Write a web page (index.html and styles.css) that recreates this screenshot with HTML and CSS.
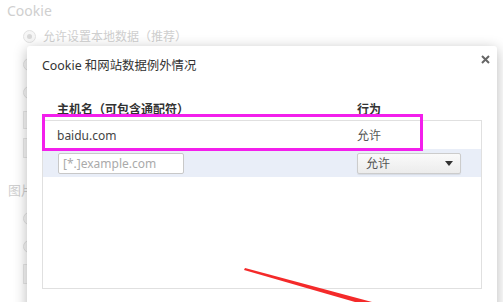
FILE: index.html
```html
<!DOCTYPE html>
<html>
<head>
    <meta charset="utf-8">
    <title>Cookie 和网站数据例外情况</title>
    <link rel="stylesheet" href="styles.css">
</head>
<body>
<div class="settings">
    <div class="section-title">Cookie</div>
    <div class="option"><span class="radio checked"></span>允许设置本地数据（推荐）</div>
    <div class="option"><span class="radio"></span></div>
    <div class="option"><span class="radio"></span></div>
    <div class="option"><span class="box"></span></div>
    <div class="option"><span class="button"></span></div>
    <div class="section-title second">图片</div>
    <div class="option"><span class="radio"></span></div>
    <div class="option"><span class="radio"></span></div>
    <div class="option"><span class="button"></span></div>
</div>

<div class="dialog">
    <div class="dialog-title">Cookie 和网站数据例外情况</div>
    <a class="close" href="#">
        <svg width="9" height="9" viewBox="0 0 9 9"><path d="M1 1L8 8M8 1L1 8" stroke="#666" stroke-width="2"/></svg>
    </a>

    <div class="columns">
        <span>主机名（可包含通配符）</span>
        <span>行为</span>
    </div>
    <div class="list">
        <div class="row">
            <span>baidu.com</span>
            <span class="behavior">允许</span>
        </div>
        <div class="row new">
            <span><input class="host" type="text" placeholder="[*.]example.com"></span>
            <span>
                <span class="select">允许<span class="caret"></span></span>
            </span>
        </div>
    </div>
</div>

<div class="highlight"></div>
<svg class="arrow" width="503" height="302" viewBox="0 0 503 302">
    <polygon points="245,268 372,302 355,302 244,270" fill="#f42a2a"/>
</svg>
</body>
</html>
```

FILE: styles.css
```css
body {
    margin: 0;
    width: 503px;
    height: 302px;
    overflow: hidden;
    position: relative;
    background: #fff;
    font: 12px "Noto Sans", "Noto Sans CJK SC", sans-serif;
    color: #444;
}

.settings {
    padding: 2px 0 0 7px;
    color: #cfcfcf;
}

.section-title {
    font-size: 14px;
    line-height: 18px;
    margin-bottom: 2px;
}

.section-title.second {
    font-size: 13px;
    margin: 19px 0 5px 1px;
}

.option {
    display: flex;
    align-items: center;
    gap: 7px;
    height: 28px;
    padding-left: 16px;
}

.radio {
    width: 11px;
    height: 11px;
    border: 1px solid #e2e2e2;
    border-radius: 50%;
    background: #f6f6f6;
    position: relative;
}

.radio.checked::after {
    content: "";
    position: absolute;
    left: 3px;
    top: 3px;
    width: 5px;
    height: 5px;
    border-radius: 50%;
    background: #d8d8d8;
}

.box {
    width: 10px;
    height: 16px;
    border: 1px solid #e6e6e6;
    background: #f6f6f6;
}

.button {
    width: 10px;
    height: 18px;
    border: 1px solid #e6e6e6;
    background: #f6f6f6;
}

.dialog {
    position: absolute;
    left: 27px;
    top: 46px;
    width: 455px;
    height: 290px;
    padding: 0 0 0 15px;
    background: #fff;
    border-radius: 3px;
    box-shadow: 0 3px 14px rgba(0, 0, 0, 0.28);
}

.dialog-title {
    font-size: 12.4px;
    line-height: 16px;
    padding-top: 12px;
    color: #333;
}

.close {
    position: absolute;
    right: 7px;
    top: 9px;
    line-height: 0;
}

.columns {
    display: grid;
    grid-template-columns: 300px 1fr;
    padding: 28px 0 0 15px;
    height: 18px;
    line-height: 16px;
    font-weight: bold;
    color: #333;
}

.list {
    width: 438px;
    height: 167px;
    border: 1px solid #e0e0e0;
}

.row {
    display: grid;
    grid-template-columns: 300px 1fr;
    align-items: center;
    height: 28px;
    padding-left: 14px;
}

.behavior {
    color: #555;
}

.row.new {
    height: 28px;
    background: #e9eef8;
}

.host {
    display: block;
    box-sizing: border-box;
    width: 126px;
    height: 21px;
    margin-left: 1px;
    padding: 0 4px;
    border: 1px solid #c8c8c8;
    border-radius: 2px;
    font: 12px "Noto Sans", sans-serif;
    color: #444;
}

.host::placeholder {
    color: #aaa;
}

.select {
    box-sizing: border-box;
    display: flex;
    align-items: center;
    justify-content: space-between;
    width: 104px;
    height: 21px;
    padding: 0 7px 0 8px;
    border: 1px solid #ccc;
    border-radius: 2px;
    background: linear-gradient(#fafafa, #ececec);
    color: #555;
    box-shadow: 0 1px 1px rgba(0, 0, 0, 0.08);
}

.caret {
    width: 0;
    height: 0;
    border-left: 4px solid transparent;
    border-right: 4px solid transparent;
    border-top: 5px solid #333;
}

.highlight {
    position: absolute;
    left: 42px;
    top: 114px;
    width: 375px;
    height: 31px;
    border: 3px solid #f31fec;
}

.arrow {
    position: absolute;
    left: 0;
    top: 0;
}
```
